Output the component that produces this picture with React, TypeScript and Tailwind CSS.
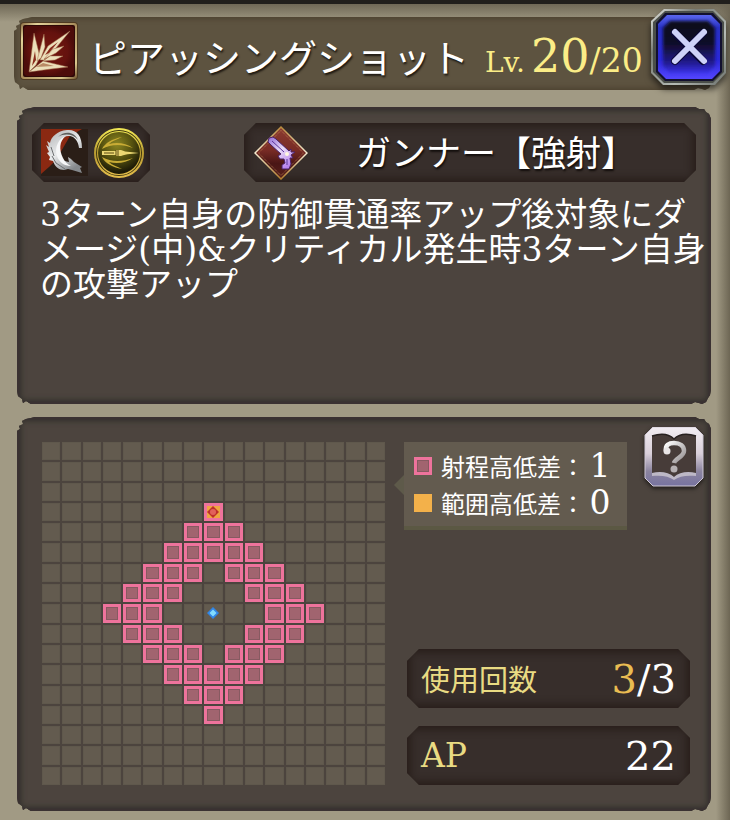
import type { ReactNode } from "react";
import clsx from "clsx";

const SIZE = 17;
const CENTER = 8;
const MIN_RANGE = 3;
const MAX_RANGE = 5;

const SERIF = "font-['DejaVu_Serif','Noto_Sans_CJK_JP',serif]";
const TORN =
  "[clip-path:polygon(0_14px,3px_12px,2px_9px,6px_7px,5px_4px,9px_2px,14px_1px,18px_0,calc(100%-16px)_0,calc(100%-12px)_2px,calc(100%-7px)_2px,calc(100%-5px)_5px,calc(100%-2px)_7px,100%_12px,100%_calc(100%-15px),calc(100%-1px)_calc(100%-9px),calc(100%-3px)_calc(100%-6px),calc(100%-5px)_calc(100%-2px),calc(100%-9px)_100%,calc(100%-12px)_calc(100%-1px),calc(100%-16px)_calc(100%-2px),calc(100%-20px)_100%,14px_100%,9px_calc(100%-3px),6px_calc(100%-1px),5px_calc(100%-5px),1px_calc(100%-8px),0_calc(100%-14px))]";

function Panel({ className, children }: { className?: string; children: ReactNode }) {
  return (
    <section
      className={clsx(
        "relative ml-[17px] mr-[19px] rounded-lg bg-[#4c443e] shadow-[inset_0_0_2px_3px_#3a3132,inset_0_0_5px_5px_#3a3731]",
        TORN,
        className,
      )}
    >
      {children}
    </section>
  );
}

function Plate({ className, children }: { className?: string; children: ReactNode }) {
  return (
    <div
      className={clsx(
        "flex h-[59px] items-center bg-[#372e2b] shadow-[inset_0_0_9px_3px_#261c18] [clip-path:polygon(12px_0,calc(100%-12px)_0,100%_12px,100%_calc(100%-12px),calc(100%-12px)_100%,12px_100%,0_calc(100%-12px),0_12px)]",
        className,
      )}
    >
      {children}
    </div>
  );
}

function SkillIcon() {
  return (
    <svg viewBox="0 0 58 58" className="size-[58px] shrink-0" aria-hidden="true">
      <defs>
        <linearGradient id="skillFrame" x1="0" y1="0" x2="1" y2="1">
          <stop offset="0" stopColor="#8b6c42" />
          <stop offset=".15" stopColor="#e3d29a" />
          <stop offset=".5" stopColor="#a98d5c" />
          <stop offset=".85" stopColor="#d9c68c" />
          <stop offset="1" stopColor="#71542f" />
        </linearGradient>
        <radialGradient id="skillRed">
          <stop offset="0" stopColor="#74170e" />
          <stop offset=".75" stopColor="#64120e" />
          <stop offset="1" stopColor="#4d0c0a" />
        </radialGradient>
      </defs>
      <rect width="58" height="58" rx="4" fill="#4f3a22" />
      <rect x="1" y="1" width="56" height="56" rx="3" fill="url(#skillFrame)" />
      <rect x="3" y="3" width="52" height="52" rx="2" fill="#2f0807" />
      <rect x="4" y="4" width="50" height="50" rx="4" fill="url(#skillRed)" />
      <g fill="#ecdfba" stroke="#a06a48" strokeWidth=".5">
        <path d="M9 50 14 11 20 35 16 43Z" />
        <path d="M17 39 24 12 25 25 21 36Z" />
        <path d="M20 38 28 24 50 9 36 26 24 38Z" />
        <path d="M24 37 33 27 44 24 36 31Z" />
        <path d="M23 39 30 34 43 34 35 38Z" />
        <path d="M9 50 23 39 48 45 31 47Z" />
      </g>
      <path d="m25 33 5-7 8-6-9 11ZM12 44l3-15 1 9Z" fill="#8a2c1c" />
      <path d="m16 45 7-4 11 3Z" fill="#b98a65" />
    </svg>
  );
}

function SlashIcon() {
  return (
    <svg viewBox="0 0 47 47" className="size-[47px]" aria-hidden="true">
      <defs>
        <linearGradient id="slash" x1="0" y1="0" x2=".6" y2="1">
          <stop offset="0" stopColor="#aeb0b2" />
          <stop offset=".55" stopColor="#e9ebec" />
          <stop offset="1" stopColor="#84888c" />
        </linearGradient>
      </defs>
      <rect width="47" height="47" fill="#2a1e17" />
      <path d="M0 0h41L29 7 15 31 8 38 0 45Z" fill="#8b2912" />
      <path
        d="M41 19C41 6 35 0 26 1 16 2 10 8 9 14l-3-2 2 6-3-2 3 7-2 1 3 4-1 3 4 1c2 6 6 9 11 9l4-1 4 1 10 3-2-5 2-1-8-5-3-3-3-2 1 5c-7-1-11-5-11-11 0-10 5-16 12-15 5 1 8 5 9 12Z"
        fill="url(#slash)"
      />
      <path d="M17 8C23 2 33 2 37 11 32 5 24 4 17 8Z" fill="#5d5f5c" />
      <path d="M16 27c-3-9 2-18 9-20-7 5-7 14-3 22 2 4 4 6 8 8-7 0-12-4-14-10Z" fill="#f6f7f8" />
      <path d="m11 27 4 7 9 6M10 18l3 9" fill="none" stroke="#6d7072" strokeWidth="1" />
    </svg>
  );
}

function BulletIcon() {
  return (
    <svg viewBox="0 0 50 50" className="size-[50px]" aria-hidden="true">
      <defs>
        <radialGradient id="bulletGlow" cx=".45" cy=".3" r=".65">
          <stop offset="0" stopColor="#8c8622" />
          <stop offset=".55" stopColor="#55510f" />
          <stop offset="1" stopColor="#1d1b07" />
        </radialGradient>
        <linearGradient id="bulletRing" x1="0" y1="0" x2="0" y2="1">
          <stop offset="0" stopColor="#f0e654" />
          <stop offset=".5" stopColor="#b99b31" />
          <stop offset="1" stopColor="#e2bd4b" />
        </linearGradient>
      </defs>
      <circle cx="25" cy="25" r="24" fill="#3b330e" stroke="url(#bulletRing)" strokeWidth="2" />
      <circle cx="25" cy="25" r="21.5" fill="url(#bulletGlow)" stroke="url(#bulletRing)" strokeWidth="1.2" />
      <path d="M8 21c3-6 10-10 20-12-6 3-10 4-13 7 8-2 17-1 24 4-11-4-22-4-31 1Z" fill="#c9ac35" />
      <path d="M8 29c3 6 10 10 20 12-6-3-10-4-13-7 8 2 17 1 24-4-11 4-22 4-31-1Z" fill="#c9ac35" />
      <path d="M8 23h14v-1h5c3 1 5 2 9 2l9 1-9 1c-4 0-6 1-9 2h-5v-1H8Z" fill="#ecd873" />
      <path d="M10 25h10M22 22v6M24 22v6" stroke="#5a4a12" strokeWidth="1" />
    </svg>
  );
}

function GunnerIcon() {
  return (
    <svg viewBox="0 0 54 54" className="size-[54px] shrink-0" aria-hidden="true">
      <defs>
        <linearGradient id="gunnerRed" x1="0" y1="0" x2="0" y2="1">
          <stop offset="0" stopColor="#8c3c30" />
          <stop offset=".45" stopColor="#782b25" />
          <stop offset=".7" stopColor="#4a1615" />
          <stop offset="1" stopColor="#57201b" />
        </linearGradient>
        <linearGradient id="gunnerEdge" x1="0" y1="0" x2="0" y2="1">
          <stop offset="0" stopColor="#b98b3d" />
          <stop offset=".5" stopColor="#f5ecd2" />
          <stop offset="1" stopColor="#b27c2c" />
        </linearGradient>
        <linearGradient id="gunnerGun" x1="0" y1="0" x2=".6" y2="1">
          <stop offset="0" stopColor="#8f6ad6" />
          <stop offset=".5" stopColor="#eadcf6" />
          <stop offset="1" stopColor="#b783ee" />
        </linearGradient>
      </defs>
      <path d="M27 1 53 27 27 53 1 27Z" fill="url(#gunnerRed)" stroke="url(#gunnerEdge)" strokeWidth="1.5" />
      <path
        d="M27 4.5 49.5 27 27 49.5 4.5 27Z"
        fill="none"
        stroke="#c48a55"
        strokeWidth=".8"
        strokeDasharray="1 1"
      />
      <path
        d="M14 16 15 12 19 11 22 13 35 25 37 23 37 26 41 26 37 29 39 32 36 32 37 38 35 43 28 43 28 39 31 37 30 33 26 33 24 30 27 28 17 19Z"
        fill="url(#gunnerGun)"
        stroke="#4b2268"
        strokeWidth="1"
      />
      <path d="m18 15 12 11" stroke="#5b369b" strokeWidth="1" />
      <path d="M33 33v6" stroke="#5b369b" strokeWidth="1" />
      <circle cx="33" cy="28" r="2" fill="#fff8e0" />
    </svg>
  );
}

function CloseButton() {
  return (
    <button type="button" aria-label="Close" className="absolute right-[3px] top-[5px] h-[78px] w-[76px]">
      <svg viewBox="0 0 76 78" className="h-full w-full drop-shadow-[0_4px_3px_#0009]" aria-hidden="true">
        <defs>
          <linearGradient id="closeMetal" x1="0" y1="0" x2="1" y2="1">
            <stop offset="0" stopColor="#e6e8e4" />
            <stop offset=".3" stopColor="#767a73" />
            <stop offset=".65" stopColor="#b4bab4" />
            <stop offset="1" stopColor="#6b706c" />
          </linearGradient>
          <linearGradient id="closeBlue" x1="0" y1="0" x2="0" y2="1">
            <stop offset="0" stopColor="#5a66ee" />
            <stop offset=".2" stopColor="#2730c4" />
            <stop offset=".7" stopColor="#2a28d8" />
            <stop offset="1" stopColor="#5345ff" />
          </linearGradient>
          <linearGradient id="closeCore" x1="0" y1="0" x2="0" y2="1">
            <stop offset="0" stopColor="#0c0919" />
            <stop offset=".45" stopColor="#110d2a" />
            <stop offset=".8" stopColor="#211b8e" />
            <stop offset="1" stopColor="#3a31e8" />
          </linearGradient>
          <filter id="closeSoft" x="-10%" y="-10%" width="120%" height="120%">
            <feGaussianBlur stdDeviation="1.5" />
          </filter>
        </defs>
        <path d="M13 0h50l12 12v52L64 76H12L0 64V12Z" fill="url(#closeMetal)" />
        <path d="M14 2h48l11 11v50L62 74H13L2 63V13Z" fill="#4a4e49" />
        <path d="M14 4h48l9 10v49L62 72H14l-9-9V14Z" fill="#12102f" />
        <path d="M16 6h44l9 9v47l-8 8H15l-8-8V15Z" fill="url(#closeBlue)" />
        <path d="M19 12h38l7 7v38l-7 7H19l-7-7V19Z" fill="url(#closeCore)" filter="url(#closeSoft)" />
        <path d="M24 24 52 52M52 24 24 52" stroke="#0b083a" strokeWidth="8" strokeLinecap="round" />
        <path d="M24 23 53 52M53 23 24 52" stroke="#ced2f8" strokeWidth="6" strokeLinecap="round" />
      </svg>
    </button>
  );
}

function HelpButton() {
  return (
    <button type="button" aria-label="Help" className="absolute right-[7px] top-[10px] size-[60px]">
      <svg viewBox="0 0 60 60" className="size-full drop-shadow-[0_2px_2px_#0009]" aria-hidden="true">
        <defs>
          <linearGradient id="helpMetal" x1="0" y1="0" x2="0" y2="1">
            <stop offset="0" stopColor="#f2edf2" />
            <stop offset=".45" stopColor="#d9cfd9" />
            <stop offset=".75" stopColor="#8b849f" />
            <stop offset="1" stopColor="#7773a0" />
          </linearGradient>
          <linearGradient id="helpMark" x1="0" y1="0" x2="1" y2="1">
            <stop offset="0" stopColor="#ffffff" />
            <stop offset="1" stopColor="#918b8d" />
          </linearGradient>
        </defs>
        <path d="M9 0h42l8 8v43l-8 8H9l-8-8V8Z" fill="url(#helpMetal)" stroke="#cfc8d4" strokeWidth="1" />
        <path d="M8 9c9-3 17-2 22 3 5-5 13-6 22-3v39c-8-2-16-1-22 4-6-5-14-6-22-4Z" fill="#473c39" />
        <path d="M8 46c8-2 17-1 22 4 5-5 14-6 22-4v3c-9-1-17 0-22 4-5-4-13-5-22-4Z" fill="#bdb8c6" />
        <path d="M8 9c9-3 17-2 22 3 5-5 13-6 22-3" fill="none" stroke="#282120" strokeWidth="1.5" />
        <path
          d="M22 24c-1-6 3-8 8-8 6 0 10 3 10 8 0 6-9 7-10 12"
          fill="none"
          stroke="url(#helpMark)"
          strokeWidth="4.5"
        />
        <circle cx="23" cy="24" r="3.5" fill="#e9e5e6" />
        <circle cx="30" cy="42" r="3.5" fill="#b7b1b3" />
      </svg>
    </button>
  );
}

function Cell({ row, col }: { row: number; col: number }) {
  const distance = Math.abs(row - CENTER) + Math.abs(col - CENTER);
  const inRange = distance >= MIN_RANGE && distance <= MAX_RANGE;
  const isTarget = row === CENTER - MAX_RANGE && col === CENTER;

  return (
    <div
      className={clsx(
        "flex items-center justify-center",
        !inRange && "border border-[#5f584c] bg-[#635b4f]",
        inRange && "border-[3px] border-[#ee739c]",
        inRange && (isTarget ? "bg-[#efa640]" : "bg-[#a1646f] shadow-[inset_0_0_0_1px_#875a61]"),
      )}
    >
      {isTarget && (
        <svg viewBox="0 0 12 12" className="size-3 shrink-0" aria-hidden="true">
          <path d="M6 0 12 6 6 12 0 6Z" fill="#bd3029" />
          <circle cx="6" cy="6" r="3" fill="#e2625a" />
        </svg>
      )}
      {distance === 0 && (
        <svg viewBox="0 0 12 12" className="size-3 shrink-0" aria-hidden="true">
          <path d="M6 0 12 6 6 12 0 6Z" fill="#3185e6" />
          <path d="M6 2.500 9.500 6 6 9.500 2.500 6Z" fill="#82dcff" />
        </svg>
      )}
    </div>
  );
}

function RangeGrid() {
  return (
    <div className="grid aspect-square w-[343px] shrink-0 grid-cols-17 grid-rows-17 gap-[2px]">
      {Array.from({ length: SIZE * SIZE }, (_, i) => (
        <Cell key={i} row={Math.floor(i / SIZE)} col={i % SIZE} />
      ))}
    </div>
  );
}

function LegendRow({ swatch, label, value }: { swatch: string; label: string; value: string }) {
  return (
    <div className="flex h-[37px] items-center text-2xl leading-none">
      <span className={clsx("mr-[9px] size-[18px] shrink-0", swatch)} />
      <dt>{label}</dt>
      <dd className={clsx("w-[30px] text-center text-[33px]", SERIF)}>{value}</dd>
    </div>
  );
}

export default function App() {
  return (
    <main className="relative overflow-hidden whitespace-nowrap border-t-4 border-[#211f1c] bg-[#a19a84] bg-[linear-gradient(to_right,transparent_calc(100%-14px),#6d6654),linear-gradient(#6f6856,#a19a84_18px)] pb-[9px] font-['Noto_Sans_CJK_JP',sans-serif] text-white">
      <header
        className={clsx(
          "ml-[14px] mr-4 mt-[13px] flex h-[73px] items-center rounded-lg bg-[#5d5340] pb-[6px] pl-[6px] shadow-[inset_0_0_5px_2px_#4d4330]",
          TORN,
        )}
      >
        <SkillIcon />
        <div className="ml-[11px] flex items-baseline pt-[10px]">
          <h1 className="text-[38px] leading-none [text-shadow:1px_2px_2px_#1d1811]">
            ピアッシングショット
          </h1>
          <p className={clsx("ml-4 flex items-baseline leading-none text-[#fbed87]", SERIF)}>
            <span className="mr-[6px] text-[28px]">Lv.</span>
            <span className="text-[46px]">20</span>
            <span className="text-[33px]">/20</span>
          </p>
        </div>
      </header>
      <CloseButton />

      <Panel className="mt-[17px] min-h-[297px] px-[15px] pt-4">
        <div className="flex justify-between gap-[94px]">
          <Plate className="gap-[6px] pl-[9px] pr-[6px]">
            <SlashIcon />
            <BulletIcon />
          </Plate>
          <Plate className="flex-1 pl-[10px]">
            <GunnerIcon />
            <h2 className="ml-12 pb-1 text-[35px] leading-none [text-shadow:1px_2px_2px_#120d0b]">
              ガンナー【強射】
            </h2>
          </Plate>
        </div>
        <p className={clsx("ml-2 mt-[15px] text-[33px] leading-[35px]", SERIF)}>
          3ターン自身の防御貫通率アップ後対象にダ
          <br />
          メージ(中)&クリティカル発生時3ターン自身
          <br />
          の攻撃アップ
        </p>
      </Panel>

      <Panel className="mt-[13px] flex gap-[19px] pb-[26px] pl-[25px] pr-[21px] pt-[25px]">
        <RangeGrid />
        <div className="flex flex-1 flex-col justify-between">
          <dl className="relative w-[223px] border-b-4 border-[#5b5843] bg-[#635b4f] py-[5px] pl-[10px]">
            <span className="absolute -left-[10px] top-[33px] h-5 w-[10px] bg-[#5e5a4a] [clip-path:polygon(0_50%,100%_0,100%_100%)]" />
            <LegendRow
              swatch="border-[3px] border-[#ee739c] bg-[#a1646f] shadow-[inset_0_0_0_1px_#875a61]"
              label="射程高低差："
              value="1"
            />
            <LegendRow swatch="bg-[#f3b14a]" label="範囲高低差：" value="0" />
          </dl>
          <div className="ml-[3px] flex flex-col gap-[18px]">
            <Plate className="justify-between px-[14px]">
              <span className="text-[29px] leading-none text-[#e9db83]">使用回数</span>
              <span className={clsx("text-[40px] leading-none", SERIF)}>
                <span className="text-[#e9bc52]">3</span>/3
              </span>
            </Plate>
            <Plate className="justify-between px-[14px]">
              <span className={clsx("text-[33px] leading-none text-[#e9db83]", SERIF)}>AP</span>
              <span className={clsx("text-[40px] leading-none", SERIF)}>22</span>
            </Plate>
          </div>
        </div>
        <HelpButton />
      </Panel>
    </main>
  );
}
